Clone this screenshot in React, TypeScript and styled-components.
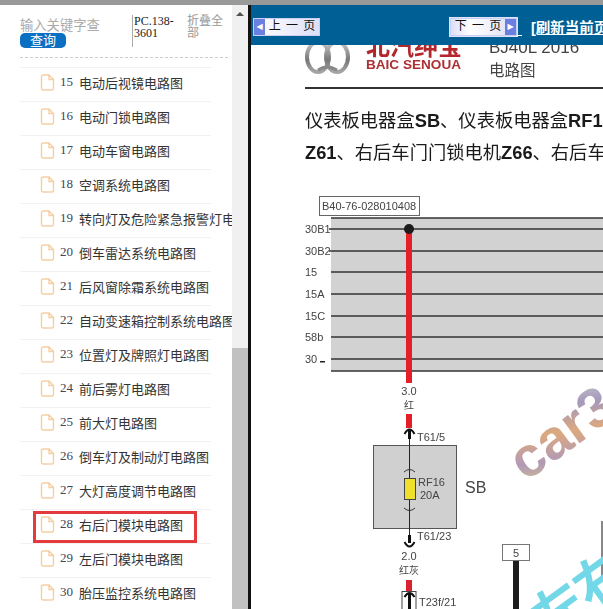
import styled, { createGlobalStyle } from "styled-components";

const CJK = `"Liberation Sans", "Noto Sans CJK SC", sans-serif`;
const SERIF = `"Liberation Serif", "Noto Sans CJK SC", serif`;

const chapters = [
  { no: 15, title: "电动后视镜电路图" },
  { no: 16, title: "电动门锁电路图" },
  { no: 17, title: "电动车窗电路图" },
  { no: 18, title: "空调系统电路图" },
  { no: 19, title: "转向灯及危险紧急报警灯电路图" },
  { no: 20, title: "倒车雷达系统电路图" },
  { no: 21, title: "后风窗除霜系统电路图" },
  { no: 22, title: "自动变速箱控制系统电路图" },
  { no: 23, title: "位置灯及牌照灯电路图" },
  { no: 24, title: "前后雾灯电路图" },
  { no: 25, title: "前大灯电路图" },
  { no: 26, title: "倒车灯及制动灯电路图" },
  { no: 27, title: "大灯高度调节电路图" },
  { no: 28, title: "右后门模块电路图" },
  { no: 29, title: "左后门模块电路图" },
  { no: 30, title: "胎压监控系统电路图" },
];

function PageIcon() {
  return (
    <IconBox width="15" height="17" viewBox="0 0 15 17">
      <path
        d="M1.5 2.5 Q1.5 1 3 1 H9 L13.5 5.5 V14.5 Q13.5 16 12 16 H3 Q1.5 16 1.5 14.5 Z M9 1 V5.5 H13.5"
        fill="#fff"
        stroke="#f5cfa4"
        strokeWidth="1.4"
      />
    </IconBox>
  );
}

function BrandLogo() {
  return (
    <svg width="160" height="44" viewBox="0 0 160 44">
      <defs>
        <linearGradient id="metal" x1="0" y1="0" x2="0" y2="1">
          <stop offset="0" stopColor="#c8c8c8" />
          <stop offset="0.6" stopColor="#777" />
          <stop offset="1" stopColor="#a5a5a5" />
        </linearGradient>
      </defs>
      <ellipse cx="13" cy="25" rx="11" ry="15" fill="none" stroke="url(#metal)" strokeWidth="4" />
      <ellipse cx="32" cy="25" rx="11" ry="15" fill="none" stroke="url(#metal)" strokeWidth="4" />
      <path d="M13 38 Q22 32 32 38" fill="none" stroke="#888" strokeWidth="3" />
      <text x="61" y="23" fontFamily={CJK} fontSize="24" fontWeight="700" fill="#b3262b">
        北汽绅宝
      </text>
      <text
        x="61"
        y="37"
        fontFamily={CJK}
        fontSize="13.5"
        fontWeight="700"
        fill="#ae2f33"
        textLength="95"
        lengthAdjust="spacingAndGlyphs"
      >
        BAIC SENOUA
      </text>
    </svg>
  );
}

const busBars = [
  { y: 218, label: "" },
  { y: 229, label: "30B1" },
  { y: 251, label: "30B2" },
  { y: 272, label: "15" },
  { y: 294, label: "15A" },
  { y: 316, label: "15C" },
  { y: 337, label: "58b" },
  { y: 359, label: "30" },
  { y: 371, label: "" },
];

function WiringDiagram() {
  return (
    <DiagramBox width="352" height="419" viewBox="251 190 352 419" fontFamily={CJK} fill="#444">
      <defs>
        <linearGradient id="stamp" x1="0" y1="1" x2="1" y2="0">
          <stop offset="0" stopColor="#d9c46a" />
          <stop offset="0.25" stopColor="#a98fb0" />
          <stop offset="0.5" stopColor="#d9a070" />
          <stop offset="0.75" stopColor="#9c8fb4" />
          <stop offset="1" stopColor="#c9c9c9" />
        </linearGradient>
      </defs>

      <rect x="319.5" y="196.5" width="100" height="19" fill="#fff" stroke="#666" />
      <text x="322" y="209.5" fontSize="11">B40-76-028010408</text>

      <rect x="331" y="218" width="272" height="153" fill="#d2d2d2" />
      {busBars.map((bar) => (
        <g key={bar.y}>
          <line
            x1={bar.label === "30B1" || bar.label === "30B2" ? 329 : 331}
            x2="603"
            y1={bar.y}
            y2={bar.y}
            stroke="#333"
            strokeWidth="1.5"
          />
          <text x="305" y={bar.y + 4} fontSize="11">
            {bar.label}
          </text>
        </g>
      ))}
      <rect x="320" y="361" width="5" height="1.5" fill="#222" />

      <rect x="406" y="229" width="6" height="154" fill="#e41f28" />
      <circle cx="409" cy="229" r="5" fill="#1c1c1c" />
      <text x="409" y="395" fontSize="11" textAnchor="middle">3.0</text>
      <text x="409" y="409" fontSize="10" textAnchor="middle">红</text>

      <rect x="406" y="414" width="6" height="14" fill="#e41f28" />
      <rect x="373.5" y="445.5" width="83" height="83" fill="#d0d0d0" stroke="#555" />
      <line x1="409.5" x2="409.5" y1="432" y2="536" stroke="#222" />
      <path d="M404.5 434 Q409.5 425 414.5 434" fill="none" stroke="#111" strokeWidth="2" />
      <rect x="408" y="430" width="3" height="9" fill="#111" />
      <text x="417" y="441" fontSize="11">T61/5</text>

      <path d="M404 472 Q409.5 467 415 472" fill="none" stroke="#333" />
      <rect x="404.5" y="478.5" width="11" height="21" fill="#efe02c" stroke="#444" />
      <path d="M404 508 Q409.5 513 415 508" fill="none" stroke="#333" />
      <text x="418" y="486" fontSize="11">RF16</text>
      <text x="420" y="499" fontSize="11">20A</text>
      <text x="465" y="493" fontSize="16">SB</text>

      <rect x="408" y="535" width="3" height="8" fill="#111" />
      <path d="M404.5 542 Q409.5 551 414.5 542" fill="none" stroke="#111" strokeWidth="2" />
      <text x="417" y="540" fontSize="11">T61/23</text>
      <text x="409" y="560" fontSize="11" textAnchor="middle">2.0</text>
      <text x="409" y="574" fontSize="10" textAnchor="middle">红灰</text>

      <rect x="406" y="580" width="6" height="12" fill="#d9232f" />
      <rect x="402" y="591.5" width="14" height="20" fill="#fff" stroke="#444" />
      <path d="M404.5 597 Q409.5 589 414.5 597" fill="none" stroke="#111" strokeWidth="2" />
      <rect x="408" y="593" width="3" height="16" fill="#111" />
      <text x="419" y="606" fontSize="11">T23f/21</text>

      <rect x="502.5" y="544.5" width="27" height="16" fill="#fff" stroke="#777" />
      <text x="516" y="556.5" fontSize="11" textAnchor="middle">5</text>
      <rect x="513" y="561" width="6" height="48" fill="#1d1d1d" />
      <rect x="601" y="521" width="2" height="59" fill="#888" />

      <text
        x="0"
        y="0"
        transform="translate(526 482) rotate(-36)"
        fontSize="56"
        fontWeight="700"
        fill="url(#stamp)"
        opacity="0.9"
      >
        car3
      </text>
      <text
        x="0"
        y="0"
        transform="translate(548 640) rotate(-36)"
        fontSize="52"
        fontWeight="700"
        fill="#72d7e6"
      >
        左右
      </text>
    </DiagramBox>
  );
}

export default function App() {
  return (
    <>
      <GlobalStyle />
      <Shell>
        <TopStrip />
        <Body>
          <Sidebar>
            <SearchBar>
              <SearchGroup>
                <KeywordInput placeholder="输入关键字查询" />
                <SearchButton>查询</SearchButton>
              </SearchGroup>
              <PartNumber>PC.138-3601</PartNumber>
              <CollapseAll>折叠全部</CollapseAll>
            </SearchBar>
            <ChapterList>
              {chapters.map((c) => (
                <ChapterRow key={c.no}>
                  {c.no === 28 && <Highlight />}
                  <PageIcon />
                  <ChapterNo>{c.no}</ChapterNo>
                  <ChapterTitle>{c.title}</ChapterTitle>
                </ChapterRow>
              ))}
            </ChapterList>
          </Sidebar>
          <ScrollTrack>
            <ScrollArrow />
            <ScrollThumb />
          </ScrollTrack>
          <Divider />
          <Viewer>
            <Toolbar>
              <PageButton>
                <ArrowCap>◀</ArrowCap>
                <PageLabel>上 一 页</PageLabel>
              </PageButton>
              <NextButton>
                <PageLabel>下 一 页</PageLabel>
                <ArrowCap>▶</ArrowCap>
              </NextButton>
              <LinkStub />
              <RefreshLink>[刷新当前页]</RefreshLink>
            </Toolbar>
            <Sheet>
              <SheetHead>
                <BrandLogo />
                <ModelInfo>
                  <ModelName>BJ40L 2016</ModelName>
                  <ModelKind>电路图</ModelKind>
                </ModelInfo>
              </SheetHead>
              <LeadBlock>
                <Lead>
                  仪表板电器盒<b>SB</b>、仪表板电器盒<b>RF16</b>、右后门模块
                </Lead>
                <Lead>
                  <b>Z61</b>、右后车门门锁电机<b>Z66</b>、右后车窗电机
                </Lead>
              </LeadBlock>
              <WiringDiagram />
            </Sheet>
          </Viewer>
        </Body>
      </Shell>
    </>
  );
}

const GlobalStyle = createGlobalStyle`
  html, body {
    margin: 0;
    height: 100%;
    overflow: hidden;
    background: #fff;
  }
`;

const Shell = styled.div`
  display: flex;
  flex-direction: column;
  width: 603px;
  height: 609px;
  overflow: hidden;
`;

const TopStrip = styled.div`
  flex: none;
  height: 5px;
  background: #999;
`;

const Body = styled.div`
  flex: 1;
  display: flex;
  min-height: 0;
`;

// left column with the search box and chapter tree
const Sidebar = styled.div`
  flex: none;
  width: 232px;
  overflow: hidden;
  background: #fff;
`;

const SearchBar = styled.div`
  display: flex;
  box-sizing: border-box;
  height: 53px;
  margin: 0 4px 0 20px;
  padding-top: 10px;
  border-bottom: 1px dashed #ccc;
`;

const SearchGroup = styled.div`
  width: 112px;
  padding-top: 2px;
`;

const KeywordInput = styled.input`
  display: block;
  box-sizing: border-box;
  width: 80px;
  height: 16px;
  padding: 0;
  border: 0;
  outline: 0;
  font: 13.3px ${CJK};

  &::placeholder {
    color: #aaa;
    opacity: 1;
  }
`;

const SearchButton = styled.button`
  display: block;
  width: 46px;
  height: 15px;
  padding: 0;
  border: 0;
  border-radius: 5px;
  background: #0b6fc2;
  color: #fff;
  font: 13px/15px ${CJK};
`;

const PartNumber = styled.div`
  box-sizing: border-box;
  width: 55px;
  height: 32px;
  padding: 0 12px 0 1px;
  border-left: 1px solid #aaa;
  color: #222;
  font: 12px/12px ${SERIF};
`;

const CollapseAll = styled.div`
  width: 37px;
  color: #999;
  font: 12px/12px ${CJK};
`;

const ChapterList = styled.div`
  margin-top: 9px;
`;

const ChapterRow = styled.div`
  position: relative;
  display: flex;
  align-items: center;
  box-sizing: border-box;
  width: 191px;
  height: 34px;
  margin-left: 20px;
  padding: 0 0 5px 20px;
  border-top: 1px solid #f4f2f0;
  white-space: nowrap;
`;

const IconBox = styled.svg`
  flex: none;
`;

const Highlight = styled.div`
  position: absolute;
  top: 1px;
  left: 13px;
  box-sizing: border-box;
  width: 164px;
  height: 32px;
  border: 3px solid #e23a3d;
`;

const ChapterNo = styled.span`
  flex: none;
  width: 19px;
  margin-left: 5px;
  color: #445;
  font: 13px ${SERIF};
`;

const ChapterTitle = styled.span`
  flex: none;
  color: #333;
  font: 13px ${CJK};
`;

const ScrollTrack = styled.div`
  flex: none;
  display: flex;
  flex-direction: column;
  align-items: center;
  width: 16px;
  background: #f0f0f0;
`;

const ScrollArrow = styled.div`
  margin-top: 7px;
  border-right: 4px solid transparent;
  border-bottom: 4px solid #505050;
  border-left: 4px solid transparent;
`;

const ScrollThumb = styled.div`
  width: 100%;
  height: 261px;
  margin-top: auto;
  background: #c1c1c1;
`;

const Divider = styled.div`
  flex: none;
  width: 3px;
  background: #111;
`;

const Viewer = styled.div`
  flex: 1;
  display: flex;
  flex-direction: column;
  min-width: 0;
  overflow: hidden;
  background: #fff;
`;

const Toolbar = styled.div`
  position: relative;
  z-index: 1;
  flex: none;
  display: flex;
  align-items: center;
  height: 40px;
  padding: 3px 0 0 2px;
  box-sizing: border-box;
  background: #005f95;
  white-space: nowrap;
`;

const PageButton = styled.div`
  flex: none;
  display: flex;
  align-items: stretch;
  box-sizing: border-box;
  width: 67px;
  height: 18px;
  overflow: hidden;
  border: 1px solid #c9cff2;
  background: linear-gradient(90deg, #fff, #dcdff6);
`;

const NextButton = styled(PageButton)`
  margin-left: 130px;
  outline: 1px solid #dfe3fb;
  background: linear-gradient(90deg, #dcdff6, #fff 30%, #d9dcf3);
`;

const ArrowCap = styled.span`
  flex: none;
  width: 11px;
  background: #6b7fe0;
  color: #fff;
  text-align: center;
  font: 8px/16px "DejaVu Sans", sans-serif;
`;

const PageLabel = styled.span`
  flex: 1;
  color: #111;
  text-align: center;
  font: 12px/15px ${CJK};
  word-spacing: 2px;
`;

const LinkStub = styled.span`
  flex: none;
  align-self: flex-end;
  width: 5px;
  margin-bottom: 9px;
  border-bottom: 1px solid #fff;
`;

const RefreshLink = styled.a`
  flex: none;
  margin-left: 9px;
  color: #fff;
  font: 700 14.5px ${CJK};
  text-decoration: underline;
`;

// scanned manual page; its top runs under the toolbar
const Sheet = styled.div`
  flex: 1;
  margin-top: -13px;
  overflow: hidden;
  filter: blur(0.3px);
`;

const SheetHead = styled.div`
  display: flex;
  box-sizing: border-box;
  width: 298px;
  height: 57px;
  margin-left: 54px;
  border-bottom: 2px solid #333;
`;

const ModelInfo = styled.div`
  margin-left: 24px;
  color: #444;
`;

const ModelName = styled.div`
  margin-top: 6px;
  font: 17px/20px ${CJK};
`;

const ModelKind = styled.div`
  margin-top: 3px;
  font: 15.5px/20px ${CJK};
`;

const LeadBlock = styled.div`
  margin: 16px 0 21px 54px;
`;

const Lead = styled.div`
  height: 32px;
  color: #1a1a1a;
  font: 18.3px/32px ${CJK};
  white-space: nowrap;
`;

const DiagramBox = styled.svg`
  display: block;
`;
